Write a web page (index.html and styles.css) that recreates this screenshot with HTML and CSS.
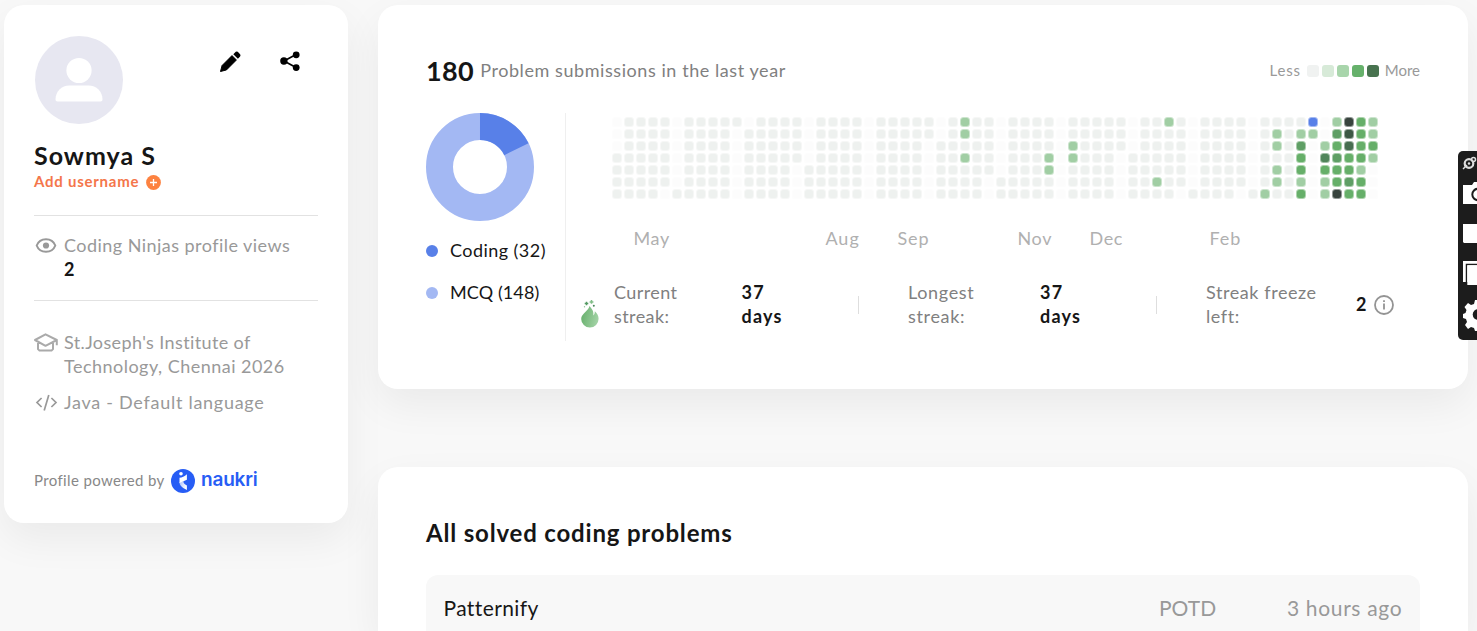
FILE: index.html
```
<!DOCTYPE html>
<html lang="en">
<head>
<meta charset="utf-8">
<title>Profile</title>
<link rel="stylesheet" href="styles.css">
</head>
<body>
<div class="page">
  <aside class="card profile">
    <div class="profile-top">
      <svg class="avatar" width="90" height="90" viewBox="0 0 90 90"><circle cx="45" cy="45" r="44" fill="#e7e7f1"/><circle cx="45" cy="35.500" r="12.600" fill="#fff"/><path d="M21.500 64.500c0-8 6-14 14-14h19c8 0 14 6 14 14 0 1.200-.8 2-2 2h-43c-1.200 0-2-.8-2-2z" fill="#fff"/></svg>
      <div class="actions">
        <svg width="22" height="22" viewBox="0 0 22 22"><path d="M1.500 20.500l1.600-6L13 4.600l4.400 4.400L7.500 18.900z" stroke="#000" stroke-linejoin="round"/><path d="M14.300 3.200l1.500-1.500a2.600 2.600 0 0 1 3.900 0l.7.700a2.600 2.600 0 0 1 0 3.900l-1.500 1.500z"/></svg>
        <svg width="20" height="20" viewBox="0 0 20 20"><path d="M16 3.500L4 10l12 6.600" fill="none" stroke="#000" stroke-width="1.700"/><circle cx="16.200" cy="3.800" r="3.400"/><circle cx="3.900" cy="10" r="3.700"/><circle cx="16.200" cy="16.600" r="3.400"/></svg>
      </div>
    </div>
    <h1 class="name">Sowmya S</h1>
    <div class="username"><span>Add username</span><svg width="15" height="15" viewBox="0 0 15 15"><circle cx="7.500" cy="7.500" r="7.400" fill="#fd8240"/><path d="M7.500 4v7M4 7.500h7" stroke="#fff" stroke-width="1.300"/></svg></div>
    <div class="views">
      <svg width="24" height="24" viewBox="0 0 24 24" fill="none" stroke="#999" stroke-width="2"><path d="M2.700 11.500c1.500-4 5.200-6.300 9.300-6.300s7.800 2.300 9.300 6.300c-1.500 4-5.200 6.300-9.300 6.300S4.200 15.500 2.700 11.500z"/><circle cx="12" cy="11.500" r="3.100" fill="#999" stroke="none"/></svg>
      <div><div class="t-views">Coding Ninjas profile views</div><b>2</b></div>
    </div>
    <div class="info">
      <svg width="24" height="24" viewBox="0 0 24 24" fill="none" stroke="#aaa" stroke-width="2" stroke-linejoin="round"><path d="M1 9L11.500 3.300 22.800 9 11.500 14.800zM4 10.800v7.300l1.500 1.500h12l1.500-1.500v-7.300M22.800 9v5.200"/></svg>
      <div><div class="t-school">St.Joseph's Institute of</div><div class="t-college">Technology, Chennai 2026</div></div>
      <svg width="24" height="24" viewBox="0 0 24 24" fill="none" stroke="#999" stroke-width="1.700"><path d="M7.600 8L3 12.500 7.600 17M17.400 8l4.600 4.500-4.600 4.500M14.800 5L10.200 20.500"/></svg>
      <div class="t-java">Java - Default language</div>
    </div>
    <div class="powered"><span class="t-powered">Profile powered by</span>
      <svg width="24" height="24" viewBox="0 0 24 24"><defs><linearGradient id="ng" x1="0" y1="0" x2="1" y2=".4"><stop offset="0" stop-color="#fff" stop-opacity=".6"/><stop offset="1" stop-color="#fff"/></linearGradient></defs><circle cx="12" cy="12" r="12" fill="#275df5"/><circle cx="10" cy="4.700" r="1.800" fill="#fff"/><path d="M8.500 8.800c2.500 0 5-1.200 7.400-3.500v5.400L8.500 14z" fill="#fff"/><path d="M8.500 13l4-.8c-.4 1.800 1 3 3.400 4.300V21c-5-2.300-7.600-5-7.400-8z" fill="url(#ng)"/></svg>
      <span class="naukri">naukri</span></div>
  </aside>
  <main class="main">
    <section class="card stats">
      <header class="stats-head">
        <div class="total"><b>180</b><span>Problem submissions in the last year</span></div>
        <div class="scale"><span class="less">Less</span><i class="s0"></i><i class="s1"></i><i class="s2"></i><i class="s3"></i><i class="s4"></i><span class="more">More</span></div>
      </header>
      <div class="stats-body">
        <div class="breakdown">
          <svg width="108" height="108" viewBox="0 0 108 108"><circle cx="54" cy="54" r="40.500" fill="none" stroke="#a3b8f3" stroke-width="27"/><path d="M54 13.500A40.500 40.500 0 0 1 90.400 36.250" fill="none" stroke="#5880e8" stroke-width="27"/></svg>
          <div class="legend"><i></i><span class="t-coding">Coding (32)</span></div>
          <div class="legend mcq"><i></i><span class="t-mcq">MCQ (148)</span></div>
        </div>
        <div class="activity">
          <div class="heatmap" id="heatmap"></div>
          <div class="months"><span class="m2">May</span><span class="m18">Aug</span><span class="m24">Sep</span><span class="m34">Nov</span><span class="m40">Dec</span><span class="m50">Feb</span></div>
          <div class="streaks">
            <svg class="flame" width="20" height="28" viewBox="0 0 20 28"><defs><linearGradient id="fl" x1="0" y1=".4" x2="1" y2=".7"><stop offset="0" stop-color="#69b16e"/><stop offset="1" stop-color="#a5d4a8"/></linearGradient></defs><path d="M9.500 6c2 3 4.500 4.400 3.800 9.500 1.400-1.300 1.500-2.600 1.500-4.200 2.500 2.300 3.800 4.500 3.800 7.500a8.700 8.700 0 0 1-17.400.1C1.200 13.500 8.200 11.500 9.500 6z" fill="url(#fl)"/><path d="M6.500 1.700v3.600M4.700 3.500h3.600" stroke="#559b64" stroke-width="1.500"/><path d="M11.500 0v3.800M9.600 1.900h3.800" stroke="#80bd87" stroke-width="1.500"/><circle cx="13.800" cy="5.700" r="1" fill="#488859"/><circle cx="4.500" cy="6.700" r=".7" fill="#8dc592"/></svg>
            <div class="label l-cur">Current<br>streak:</div><div class="value">37<br>days</div><i class="sep"></i>
            <div class="label l-long">Longest<br>streak:</div><div class="value">37<br>days</div><i class="sep"></i>
            <div class="label l-frz">Streak freeze<br>left:</div><div class="freeze"><b>2</b><svg width="20" height="20" viewBox="0 0 20 20" fill="none" stroke="#949494" stroke-width="1.800"><circle cx="10" cy="10" r="9"/><path d="M10 8.500v6M10 5.200v1.700"/></svg></div>
          </div>
        </div>
      </div>
    </section>
    <section class="card problems">
      <h2>All solved coding problems</h2>
      <div class="row"><span class="t-pat">Patternify</span><span class="potd">POTD</span><span class="ago">3 hours ago</span></div>
    </section>
  </main>
</div>
<div class="recorder">
  <svg width="19" height="189" viewBox="0 0 19 189"><path d="M5 18l4-4" stroke="#ddd" stroke-width="1.500"/><circle cx="11" cy="12.500" r="4.300" fill="none" stroke="#ddd" stroke-width="2.200"/><circle cx="15.500" cy="8.500" r="2" fill="none" stroke="#ddd" stroke-width="1.500"/><circle cx="11" cy="12.500" r="1.200" fill="#ddd"/><path d="M5 34h9l2-3h3v22H5z" fill="#fff"/><circle cx="20" cy="43.500" r="5.700" fill="none" stroke="#1c1c1c" stroke-width="2"/><path d="M5 73h14v19H6l-1-1zM5 110h14v21H5z" fill="#fff"/><path d="M8.500 132v-18.500H19" fill="none" stroke="#1c1c1c" stroke-width="1.500"/><path d="M9.300 114.300H19V134H9.300z" fill="#fff"/><path d="M19 149h-2l-1 4-3 1-3-2-3.500 4 2 3-1 3-2.500 1v4l3 1 1 3-2 3 3 4 3-2 3 1 1 3h2z" fill="#fff"/><circle cx="20" cy="163.500" r="5.300" fill="#1c1c1c"/></svg>
</div>
<script src="heatmap.js"></script>
</body>
</html>
```
FILE: styles.css
```
* { box-sizing: border-box; }
html, body { height: 100%; overflow: hidden; }
body { margin: 0; background: #f8f8f8; color: #161616; font: 18px/24px Lato, "Open Sans", sans-serif; position: relative; }
svg { display: block; flex: none; }
h1, h2 { margin: 0; font-weight: 700; }
.page { display: flex; align-items: flex-start; gap: 30px; padding: 5px 9px 0 4px; }
.card { background: #fff; border-radius: 20px; box-shadow: 0 16px 40px rgba(0,0,0,.06); }
.profile { width: 344px; height: 518px; padding: 30px; }
.profile-top { display: flex; justify-content: space-between; height: 90px; }
.actions { display: flex; gap: 39px; padding: 16px 18px 0 0; }
.name { font-size: 25px; line-height: 32px; letter-spacing: 1px; margin-top: 14px; }
.username { display: flex; align-items: center; gap: 7px; margin-top: 1px; color: #f4764b; font-size: 15px; line-height: 20px; font-weight: 700; letter-spacing: .75px; }
.username span { margin-top: -1px; }
.username svg { margin-top: 1px; }
.views { margin-top: 24px; border: solid #e2e2e2; border-width: 1px 0; height: 86px; padding-top: 17px; display: flex; gap: 6px; color: #999; }
.views svg, .info svg { margin-top: 1px; }
.views b { color: #161616; display: block; }
.info { display: grid; grid-template-columns: 24px 1fr; gap: 11px 6px; color: #999; margin-top: 29px; }
.t-views { letter-spacing: .46px; }
.t-school { letter-spacing: .38px; }
.t-college { letter-spacing: .48px; }
.t-java { letter-spacing: .73px; padding-top: 1px; }
.powered { display: flex; align-items: center; margin-top: 55px; font-size: 15px; color: #888; white-space: nowrap; }
.t-powered { width: 137px; letter-spacing: .36px; margin-top: -2px; }
.naukri { color: #275df5; font: 600 19px/24px Inter, sans-serif; margin: -2px 0 0 6px; letter-spacing: -.2px; }
.main { flex: 1; display: flex; flex-direction: column; gap: 78px; }
.stats { height: 384px; padding: 48px; }
.stats-head { display: flex; justify-content: space-between; height: 36px; align-items: center; }
.total { display: flex; align-items: center; gap: 6px; color: #808080; letter-spacing: .57px; }
.total span { margin-top: -2px; }
.total b { color: #161616; font-size: 27px; letter-spacing: .4px; }
.scale { display: flex; align-items: center; gap: 3px; color: #999; font-size: 15px; }
.scale span { margin-top: -2px; }
.scale i { width: 12px; height: 12px; border-radius: 3px; }
.scale .less { margin-right: 3px; letter-spacing: .8px; }
.scale .more { margin-left: 3px; }
.s0 { background: #f0f2f1; } .s1 { background: #d7ead8; } .s2 { background: #a8d5ab; } .s3 { background: #66b16b; } .s4 { background: #48734f; }
.stats-body { display: flex; margin-top: 24px; height: 228px; }
.breakdown { width: 140px; border-right: 1px solid #efefef; }
.legend { display: flex; align-items: center; gap: 12px; margin-top: 18px; white-space: nowrap; }
.legend span { margin: -1px 0 1px; }
.legend i { width: 12px; height: 12px; margin-top: -1px; border-radius: 50%; background: #5880e8; }
.breakdown svg { margin-bottom: 18px; }
.legend.mcq i { background: #a3b8f3; }
.t-coding { letter-spacing: .45px; } .t-mcq { letter-spacing: .1px; }
.activity { width: 854px; }
.heatmap { display: grid; grid-template: repeat(7, 12px) / repeat(64, 12px); padding: 3px 0 0 45px; }
.cell { width: 10px; height: 10px; margin: 1px; border-radius: 3.500px; background: #eef1ef; border: 1px solid rgba(255,255,255,.45); }
.e { background: #fcfcfc; } .l { background: #a1cea4; } .m { background: #66af69; } .n { background: #5f9f65; }
.o { background: #50855a; } .p { background: #476e50; } .q { background: #3d5945; } .r { background: #38443e; } .b { background: #5880e8; }
.months { display: grid; grid-template-columns: repeat(64, 12px); padding-left: 43.400px; margin-top: 26px; color: #b0b0b0; letter-spacing: .7px; }
.months span { grid-row: 1; width: 48px; }
.m2 { grid-column: 3; } .m18 { grid-column: 19; } .m24 { grid-column: 25; } .m34 { grid-column: 35; } .m40 { grid-column: 41; } .m50 { grid-column: 51; }
.months .m18, .months .m24 { letter-spacing: 1px; }
.months .m50 { letter-spacing: 1px; }
.streaks { display: grid; grid-template-columns: 34px 127.500px 116.500px 50px 132px 116px 50px 150px auto; align-items: center; padding-left: 14px; margin-top: 31px; }
.flame { margin-top: 19px; }
.label, .value { margin: -1px 0 0; }
.label { color: #808080; letter-spacing: .4px; }
.l-long { letter-spacing: .65px; }
.l-frz { letter-spacing: .58px; }
.value { font-weight: 700; letter-spacing: 1.200px; color: #161616; }
.sep { width: 1px; height: 18px; background: #dedede; }
.freeze { display: flex; align-items: center; gap: 7.500px; }
.freeze b { margin-top: -1px; }
.problems { height: 164px; padding: 48px 48px 0; border-radius: 20px 20px 0 0; }
.problems h2 { font-size: 24px; line-height: 36px; letter-spacing: .82px; }
.row { display: flex; align-items: center; margin-top: 24px; height: 56px; background: #f8f8f8; border-radius: 12px 12px 0 0; padding: 0 18px 0 17.500px; font-size: 21px; }
.row span { line-height: 32px; margin-top: 10px; }
.t-pat { flex: 1; letter-spacing: .4px; }
.potd { width: 128px; color: #999; }
.ago { width: 115px; color: #999; white-space: nowrap; letter-spacing: .65px; }
.recorder { position: absolute; left: 1458px; top: 151px; width: 19px; height: 189px; background: #1c1c1c; border-radius: 5px 0 0 5px; overflow: hidden; }
```
FILE: heatmap.js
```
// One string per week column, top day first. Letters are the colour classes, g is the neutral cell.
const weeks = [
  'eeegggg','ggggggg','ggggggg','ggggggg','gggggge','eeeeeeg','ggggggg','ggggggg',
  'ggggggg','ggggggg','geeeeee','egggggg','ggggggg','ggggggg','ggggggg','ggggeee',
  'eeeeggg','ggggggg','ggggggg','ggggggg','ggggggg','eeeeeee','ggggggg','ggggggg',
  'ggggggg','ggggggg','ggeeeee','eeggggg','ggggggg','llglggg','ggggggg','gggggee',
  'eeeeegg','ggggggg','ggggggg','ggggggg','gggllgg','eeeeeee','ggllggg','ggggggg',
  'ggggggg','ggggggg','gggeeee','eeegggg','ggggggg','ggggglg','lgggggg','gggggge',
  'eeeeeeg','ggggggg','ggggggg','ggggggg','gggggge','eeeeeeg','ggggggl','gllgllg',
  'ggggggg','glnmmlm','bleeeee','eelomll','lnmnmmr','rqpmmnm','mmmmlmm','llmleee'
];
const map = document.getElementById('heatmap');
for (let day = 0; day < 7; day++) {
  for (const week of weeks) {
    const cell = document.createElement('span');
    cell.className = 'cell ' + week[day];
    map.appendChild(cell);
  }
}
```
